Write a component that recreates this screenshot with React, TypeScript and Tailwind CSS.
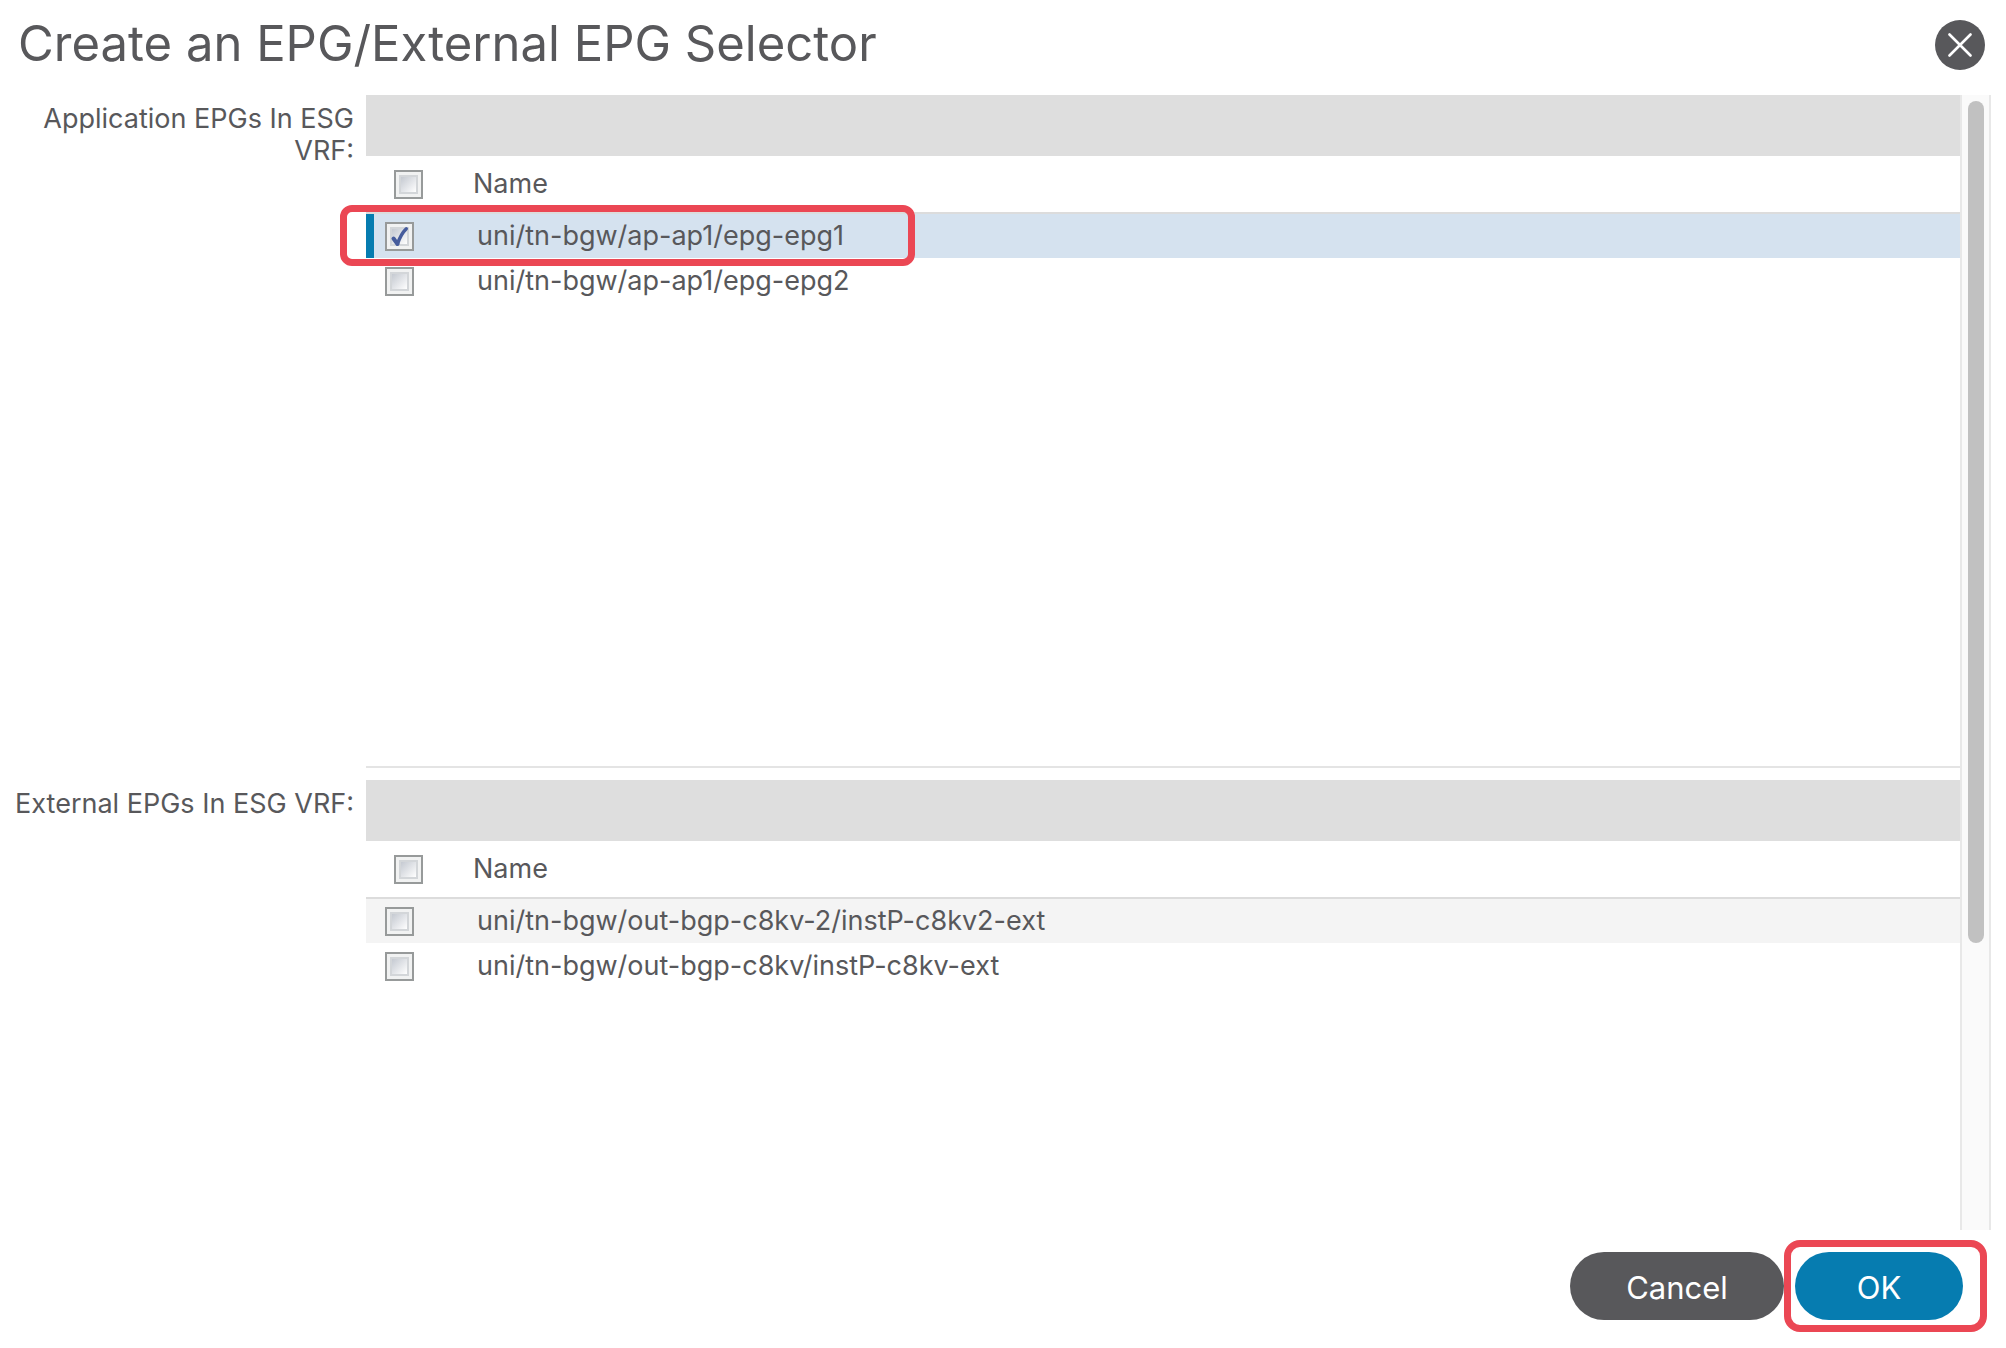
import { useState } from "react";
import clsx from "clsx";

interface EpgTableProps {
  label: string;
  items: string[];
  selected: string[];
  highlighted?: string;
  striped?: boolean;
  onToggle: (names: string[], checked: boolean) => void;
}

const APPLICATION_EPGS = ["uni/tn-bgw/ap-ap1/epg-epg1", "uni/tn-bgw/ap-ap1/epg-epg2"];

const EXTERNAL_EPGS = [
  "uni/tn-bgw/out-bgp-c8kv-2/instP-c8kv2-ext",
  "uni/tn-bgw/out-bgp-c8kv/instP-c8kv-ext",
];

const Checkbox = ({
  label,
  checked,
  onChange,
}: {
  label: string;
  checked: boolean;
  onChange: (checked: boolean) => void;
}) => (
  <label className="relative block size-[29px]">
    <input
      type="checkbox"
      aria-label={label}
      checked={checked}
      onChange={(e) => onChange(e.target.checked)}
      className="block size-[29px] appearance-none border-2 border-[#979a9a] bg-linear-to-br from-[#b2b8c2] to-white to-80% shadow-[inset_0_0_0_3px_#f1f2f2,inset_0_0_0_5px_#d3d6d9]"
    />
    {checked && (
      <svg
        viewBox="0 0 29 29"
        className="pointer-events-none absolute inset-0 size-full"
        fill="none"
        stroke="#465c9c"
        strokeLinecap="round"
        strokeLinejoin="round"
      >
        <path d="M8.5 16.5 12.5 22" strokeWidth="4" />
        <path d="M12.5 22 C14.5 16 17.5 10.5 21.3 6.8" strokeWidth="3.4" />
      </svg>
    )}
  </label>
);

const EpgTable = ({
  label,
  items,
  selected,
  highlighted,
  striped,
  onToggle,
}: EpgTableProps) => {
  const allSelected = items.every((item) => selected.includes(item));

  return (
    <section className="flex">
      <h2 className="w-[366px] shrink-0 pt-2 pr-3 pl-2 text-right text-[27px] leading-8">
        {label}
      </h2>

      <div className="min-h-[673px] min-w-0 flex-1 border-b-2 border-[#e4e4e4]">
        <div className="h-[61px] bg-[#dedede]" />
        <table className="w-full table-fixed border-separate border-spacing-0 text-left text-[27px] leading-8">
          <thead>
            <tr className="h-14">
              <th className="w-[107px] pl-7">
                <Checkbox
                  label={`Select all ${label}`}
                  checked={allSelected}
                  onChange={(checked) => onToggle(items, checked)}
                />
              </th>
              <th className="font-normal">Name</th>
            </tr>
          </thead>
          <tbody>
            {items.map((item, index) => {
              const isSelected = selected.includes(item);
              const cell = clsx(
                index === 0 && "border-t-2 border-[#dcdcdc]",
                isSelected && "bg-[#d5e2ef]",
                !isSelected && striped && index % 2 === 0 && "bg-[#f4f4f4]"
              );

              return (
                <tr key={item} className="h-[46px]">
                  <td
                    className={clsx(
                      cell,
                      "relative pl-[19px]",
                      isSelected && "shadow-[inset_8px_0_0_#067cb0]"
                    )}
                  >
                    <Checkbox
                      label={item}
                      checked={isSelected}
                      onChange={(checked) => onToggle([item], checked)}
                    />
                    {item === highlighted && (
                      <div className="pointer-events-none absolute -top-[9px] -left-[26px] z-10 h-[61px] w-[575px] rounded-xl border-[7px] border-[#eb4754]" />
                    )}
                  </td>
                  <td className={clsx(cell, "pl-1")}>{item}</td>
                </tr>
              );
            })}
          </tbody>
        </table>
      </div>
    </section>
  );
};

export default function App() {
  const [selected, setSelected] = useState<string[]>([APPLICATION_EPGS[0]]);

  const handleToggle = (names: string[], checked: boolean) => {
    setSelected((prev) => {
      const rest = prev.filter((name) => !names.includes(name));
      return checked ? [...rest, ...names] : rest;
    });
  };

  return (
    <div className="flex h-screen flex-col bg-white font-['Inter',sans-serif] text-[#58585b]">
      <header className="flex h-[95px] shrink-0 items-start justify-between pt-5 pr-[21px] pl-[18px]">
        <h1 className="text-[49px] leading-[48px]">
          Create an EPG/External EPG Selector
        </h1>
        <button
          aria-label="Close"
          className="flex size-[50px] items-center justify-center rounded-full bg-[#58585b]"
        >
          <svg
            viewBox="0 0 24 24"
            className="size-6"
            stroke="white"
            strokeWidth="2.6"
            strokeLinecap="round"
          >
            <path d="M1.5 1.5 22.5 22.5M22.5 1.5 1.5 22.5" />
          </svg>
        </button>
      </header>

      <main className="flex min-h-0 flex-1 pr-[15px]">
        <div className="flex min-w-0 flex-1 flex-col gap-3 overflow-y-auto [scrollbar-width:none]">
          <EpgTable
            label="Application EPGs In ESG VRF:"
            items={APPLICATION_EPGS}
            selected={selected}
            highlighted={APPLICATION_EPGS[0]}
            onToggle={handleToggle}
          />
          <EpgTable
            label="External EPGs In ESG VRF:"
            items={EXTERNAL_EPGS}
            selected={selected}
            striped
            onToggle={handleToggle}
          />
        </div>
        <div className="flex w-[31px] shrink-0 justify-center border-x-2 border-[#e8e8e8] bg-[#fafafa] pt-1.5">
          <div className="h-[75%] max-h-[842px] w-4 rounded-full bg-[#c1c1c1]" />
        </div>
      </main>

      <footer className="flex shrink-0 items-center justify-end pt-2.5 pr-[19px] pb-4 text-[31px] leading-10 text-white">
        <button className="h-[68px] w-[214px] rounded-full bg-[#58585b] pt-1">Cancel</button>
        <div className="rounded-2xl border-[7px] border-[#eb4754] py-[5px] pr-[17px] pl-1">
          <button className="h-[68px] w-[168px] rounded-full bg-[#067cb0] pt-1">OK</button>
        </div>
      </footer>
    </div>
  );
}
